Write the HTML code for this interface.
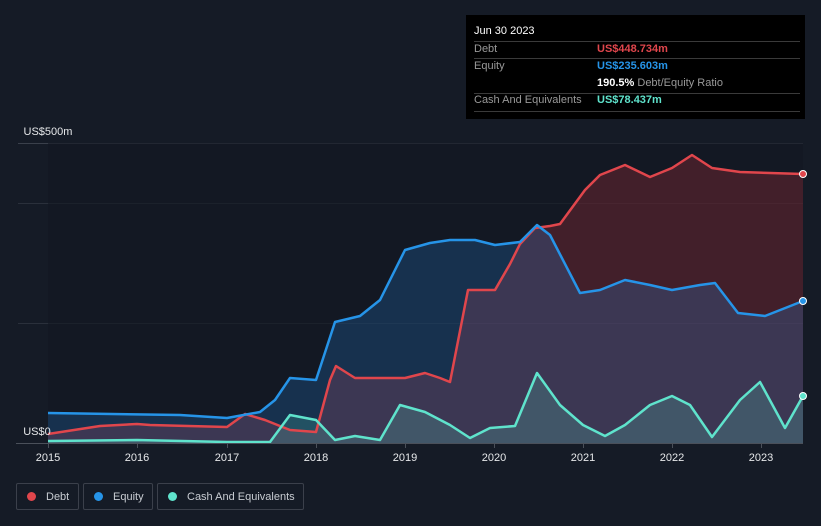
<!DOCTYPE html>
<html><head><style>
body{margin:0;background:#151b26;font-family:"Liberation Sans",sans-serif;width:821px;height:526px;overflow:hidden;position:relative}
.tip{position:absolute;left:466px;top:15px;width:339px;height:104px;background:#000;color:#fff;font-size:11px}
.tip .r{position:absolute;left:8px;width:326px;border-top:1px solid #3a3a3a}
.lg{position:absolute;top:483px;height:27px;border:1px solid #3b404b;border-radius:2px;color:#c8ccd2;font-size:11px;line-height:27px;box-sizing:border-box}
.lg i{display:inline-block;width:9px;height:9px;border-radius:50%;margin:0 10px 0 10px;vertical-align:-1px}
</style></head><body>
<svg width="821" height="526" style="position:absolute;left:0;top:0">
<g stroke="#2a303b" stroke-width="1">
<line x1="18" y1="143.5" x2="803" y2="143.5" stroke="#3a404b"/>
<line x1="18" y1="203.5" x2="803" y2="203.5"/>
<line x1="18" y1="323.5" x2="803" y2="323.5"/>
</g>
<rect x="48" y="143" width="755" height="300" fill="#121722" opacity="0.6"/>
<polygon fill="rgba(190,50,60,0.28)" points="48,443 48,434 100,426 137,424 150,425 227,427 245,414 265,420 290,430 316,432 330,380 336,366 355,378 405,378 425,373 440,378 450,382 468,290 495,290 510,264 520,244 535,228 550,226 560,224 585,190 600,175 625,165 650,177 672,168 692,155 712,168 740,172 803,174 803,443"/>
<polygon fill="rgba(40,140,230,0.22)" points="48,443 48,413 180,415 227,418 260,412 275,400 290,378 316,380 335,322 360,316 380,300 405,250 430,243 450,240 475,240 495,245 520,242 537,225 550,235 580,293 600,290 625,280 650,285 672,290 700,285 715,283 738,313 765,316 803,301 803,443"/>
<polygon fill="rgba(90,230,200,0.18)" points="48,443 48,441 137,440 227,442 270,442 290,415 316,420 335,440 355,436 380,440 400,405 425,412 450,425 470,438 490,428 515,426 537,373 560,405 583,425 605,436 625,425 650,405 672,396 690,405 712,437 740,400 760,382 785,428 803,396 803,443"/>
<g fill="none" stroke-width="2.5" stroke-linejoin="round">
<polyline stroke="#e0464c" points="48,434 100,426 137,424 150,425 227,427 245,414 265,420 290,430 316,432 330,380 336,366 355,378 405,378 425,373 440,378 450,382 468,290 495,290 510,264 520,244 535,228 550,226 560,224 585,190 600,175 625,165 650,177 672,168 692,155 712,168 740,172 803,174"/>
<polyline stroke="#2694e8" points="48,413 180,415 227,418 260,412 275,400 290,378 316,380 335,322 360,316 380,300 405,250 430,243 450,240 475,240 495,245 520,242 537,225 550,235 580,293 600,290 625,280 650,285 672,290 700,285 715,283 738,313 765,316 803,301"/>
<polyline stroke="#5fe3cc" points="48,441 137,440 227,442 270,442 290,415 316,420 335,440 355,436 380,440 400,405 425,412 450,425 470,438 490,428 515,426 537,373 560,405 583,425 605,436 625,425 650,405 672,396 690,405 712,437 740,400 760,382 785,428 803,396"/>
</g>
<circle cx="803" cy="174" r="3.5" fill="#e0464c" stroke="#fff"/>
<circle cx="803" cy="301" r="3.5" fill="#2694e8" stroke="#fff"/>
<circle cx="803" cy="396" r="3.5" fill="#5fe3cc" stroke="#fff"/>
<line x1="16" y1="443.5" x2="803" y2="443.5" stroke="#4a505a"/>
<g stroke="#4a505a"><line x1="48.5" y1="443" x2="48.5" y2="448"/><line x1="137.5" y1="443" x2="137.5" y2="448"/><line x1="227.5" y1="443" x2="227.5" y2="448"/><line x1="316.5" y1="443" x2="316.5" y2="448"/><line x1="405.5" y1="443" x2="405.5" y2="448"/><line x1="494.5" y1="443" x2="494.5" y2="448"/><line x1="583.5" y1="443" x2="583.5" y2="448"/><line x1="672.5" y1="443" x2="672.5" y2="448"/><line x1="761.5" y1="443" x2="761.5" y2="448"/></g>
<g fill="#e6e8ea" font-size="11" font-family="Liberation Sans,sans-serif" text-anchor="middle">
<text x="48" y="461">2015</text><text x="137" y="461">2016</text><text x="227" y="461">2017</text><text x="316" y="461">2018</text><text x="405" y="461">2019</text><text x="494" y="461">2020</text><text x="583" y="461">2021</text><text x="672" y="461">2022</text><text x="761" y="461">2023</text>
<text x="48" y="135">US$500m</text><text x="37" y="435">US$0</text>
</g>
</svg>
<div class="tip">
<div style="position:absolute;left:8px;top:10px">Jun 30 2023</div>
<div class="r" style="top:26px"></div>
<div style="position:absolute;left:8px;top:28px;color:#999">Debt</div><div style="position:absolute;left:131px;top:28px;color:#e0464c;font-weight:bold">US$448.734m</div>
<div class="r" style="top:43px"></div>
<div style="position:absolute;left:8px;top:45px;color:#999">Equity</div><div style="position:absolute;left:131px;top:45px;color:#2694e8;font-weight:bold">US$235.603m</div>
<div style="position:absolute;left:131px;top:62px;color:#999"><b style="color:#fff">190.5%</b> Debt/Equity Ratio</div>
<div class="r" style="top:78px"></div>
<div style="position:absolute;left:8px;top:79px;color:#999">Cash And Equivalents</div><div style="position:absolute;left:131px;top:79px;color:#5fe3cc;font-weight:bold">US$78.437m</div>
<div class="r" style="top:96px"></div>
</div>
<div class="lg" style="left:16px;width:63px"><i style="background:#e0464c"></i>Debt</div>
<div class="lg" style="left:83px;width:70px"><i style="background:#2694e8"></i>Equity</div>
<div class="lg" style="left:157px;width:147px"><i style="background:#5fe3cc"></i>Cash And Equivalents</div>
</body></html>
